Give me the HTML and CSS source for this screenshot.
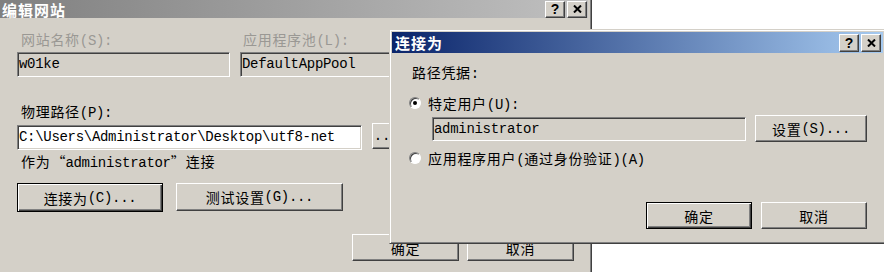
FILE: index.html
```html
<!DOCTYPE html>
<html lang="zh-CN">
<head>
  <meta charset="UTF-8" />
  <title>编辑网站 - 连接为</title>
  <link rel="stylesheet" href="styles.css">
</head>
<body>
  <div class="desk">
    <!-- 背后的对话框 -->
    <div class="win win-site">
      <div class="title title-site">
        <span class="title-text">编辑网站</span>
        <span class="caps">
          <span class="cap">?</span>
          <span class="cap"><svg width="9" height="8" viewBox="0 0 9 8"><path d="M1 0.5l7 7M8 0.5l-7 7" stroke="#000" stroke-width="2"/></svg></span>
        </span>
      </div>
      <div class="site-body">
        <div class="fields">
          <div class="field f-name">
            <span class="lbl dis">网站名称<span class="en">(S):</span></span>
            <div class="edit ro">w01ke</div>
          </div>
          <div class="field f-pool">
            <span class="lbl dis">应用程序池<span class="en">(L):</span></span>
            <div class="edit ro">DefaultAppPool</div>
          </div>
        </div>
        <span class="lbl path-lbl">物理路径<span class="en">(P):</span></span>
        <div class="path-row">
          <div class="edit path-edit">C:\Users\Administrator\Desktop\utf8-net</div>
          <div class="btn browse"><span class="en">...</span></div>
        </div>
        <div class="lbl note">作为<span class="q q-open">“</span><span class="en">administrator</span><span class="q q-close">”</span>连接</div>
        <div class="btn-row">
          <div class="btn def connect">连接为<span class="en">(C)...</span></div>
          <div class="btn test">测试设置<span class="en">(G)...</span></div>
        </div>
        <div class="site-foot">
          <div class="btn foot-btn">确定</div>
          <div class="btn foot-btn">取消</div>
        </div>
      </div>
    </div>

    <!-- 前面的对话框 -->
    <div class="win win-conn">
      <div class="title title-conn">
        <span class="title-text">连接为</span>
        <span class="caps">
          <span class="cap cap-big">?</span>
          <span class="cap cap-big"><svg width="9" height="8" viewBox="0 0 9 8"><path d="M1 0.5l7 7M8 0.5l-7 7" stroke="#000" stroke-width="2"/></svg></span>
        </span>
      </div>
      <div class="conn-body">
        <div class="grp-lbl">路径凭据<span class="en">:</span></div>
        <div class="opt opt1"><span class="radio on"></span><span>特定用户<span class="en">(U):</span></span></div>
        <div class="user-row">
          <div class="edit ro user-edit">administrator</div>
          <div class="btn set-btn">设置<span class="en">(S)...</span></div>
        </div>
        <div class="opt opt2"><span class="radio"></span><span>应用程序用户<span class="en">(</span>通过身份验证<span class="en">)(A)</span></span></div>
        <div class="conn-foot">
          <div class="btn def foot-btn2">确定</div>
          <div class="btn foot-btn2">取消</div>
        </div>
      </div>
    </div>
  </div>
</body>
</html>
```

FILE: styles.css
```css
body { margin: 0; background: #fff; font-family: "Liberation Mono", "Noto Sans CJK SC", monospace; font-size: 14px; letter-spacing: 0.7px; color: #000; }
.desk { position: relative; width: 884px; height: 272px; overflow: hidden; background: #fff; }
.en, .edit { letter-spacing: -0.3px; }
.q { display: inline-block; width: 15px; font-family: "Noto Sans CJK SC", sans-serif; letter-spacing: 0; }
.q-open { text-align: right; }
.q-close { text-align: left; }

/* 窗口 */
.win { position: absolute; background: #d4d0c8; box-sizing: border-box; }
.win-site { left: 0; top: 0; width: 592px; height: 272px; border-right: 1px solid #404040; box-shadow: inset -1px 0 #808080; }
.win-conn { left: 389px; top: 29px; width: 497px; height: 215px; border: 1px solid; border-color: #d4d0c8 #404040 #404040 #d4d0c8; box-shadow: inset 1px 1px #fff, inset -1px -1px #808080; padding: 2px; }

/* 标题栏 */
.title { display: flex; align-items: center; color: #fff; box-sizing: border-box; }
.title-site { height: 18px; margin-right: 3px; padding: 1px 1px 0 2px; background: linear-gradient(to right, #808080, #c0c0c0); }
.title-site .caps { margin-top: -1px; }
.title-conn { height: 21px; padding: 0 2px 0 3px; background: linear-gradient(to right, #0a246a, #a6caf0); }
.title-text { flex: 1; font: bold 15px "Noto Sans CJK SC", sans-serif; letter-spacing: 1px; line-height: 16px; }
.caps { display: flex; gap: 2px; }
.cap { box-sizing: border-box; width: 20px; height: 17px; background: #d4d0c8; border: 1px solid; border-color: #fff #404040 #404040 #fff; box-shadow: inset -1px -1px #808080; display: flex; align-items: center; justify-content: center; color: #000; font: bold 14px "Liberation Sans", sans-serif; letter-spacing: 0; }
.cap-big { height: 18px; }

/* 通用控件 */
.lbl { display: block; height: 16px; line-height: 16px; padding-left: 4px; white-space: nowrap; }
.dis { color: #9a9894; }
.edit { box-sizing: border-box; height: 25px; border: 1px solid; border-color: #808080 #fff #fff #808080; box-shadow: inset 1px 1px #404040, inset -1px -1px #d4d0c8; background: #fff; padding: 0 1px; line-height: 23px; white-space: nowrap; overflow: hidden; }
.edit.ro { background: #d4d0c8; }
.btn { box-sizing: border-box; background: #d4d0c8; border: 1px solid; border-color: #fff #404040 #404040 #fff; box-shadow: inset -1px -1px #808080; display: flex; align-items: center; justify-content: center; white-space: nowrap; flex: none; }
.btn.def { border-color: #000; box-shadow: inset 1px 1px #fff, inset -1px -1px #404040, inset -2px -2px #808080; }
.radio { position: relative; box-sizing: border-box; width: 12px; height: 12px; border-radius: 50%; border: 1px solid; border-color: #808080 #fff #fff #808080; box-shadow: inset 1px 1px #404040; background: #fff; flex: none; }
.radio.on::after { content: ""; position: absolute; left: 3px; top: 3px; width: 4px; height: 4px; border-radius: 50%; background: #000; }

/* 编辑网站 */
.site-body { padding: 15px 0 0 17px; }
.fields { display: flex; gap: 10px; }
.fields .lbl { margin-bottom: 3px; }
.f-name { width: 213px; }
.f-pool { width: 200px; }
.f-pool .lbl { padding-left: 3px; }
.path-lbl { margin-top: 28px; margin-bottom: 4px; }
.path-row { display: flex; align-items: flex-start; gap: 10px; }
.path-edit { width: 345px; }
.browse { width: 28px; height: 26px; margin-top: -2px; }
.note { margin-top: 3px; }
.btn-row { display: flex; align-items: flex-start; gap: 13px; margin-top: 14px; }
.connect { width: 146px; height: 29px; }
.test { width: 167px; height: 28px; }
.site-foot { display: flex; gap: 8px; margin-top: 22px; padding-left: 335px; }
.foot-btn { width: 107px; height: 27px; }

/* 连接为 */
.conn-body { padding: 13px 16px 0 17px; }
.grp-lbl { padding-left: 3px; line-height: 16px; }
.opt { display: flex; align-items: center; gap: 7px; height: 16px; white-space: nowrap; }
.opt1 { margin-top: 13px; }
.opt2 { margin-top: 8px; }
.user-row { display: flex; align-items: flex-start; gap: 9px; margin-top: 4px; padding-left: 23px; }
.user-edit { width: 314px; height: 24px; margin-top: 2px; line-height: 22px; }
.set-btn { width: 112px; height: 27px; }
.conn-foot { display: flex; justify-content: flex-end; gap: 9px; margin-top: 36px; }
.foot-btn2 { width: 106px; height: 27px; }
```
